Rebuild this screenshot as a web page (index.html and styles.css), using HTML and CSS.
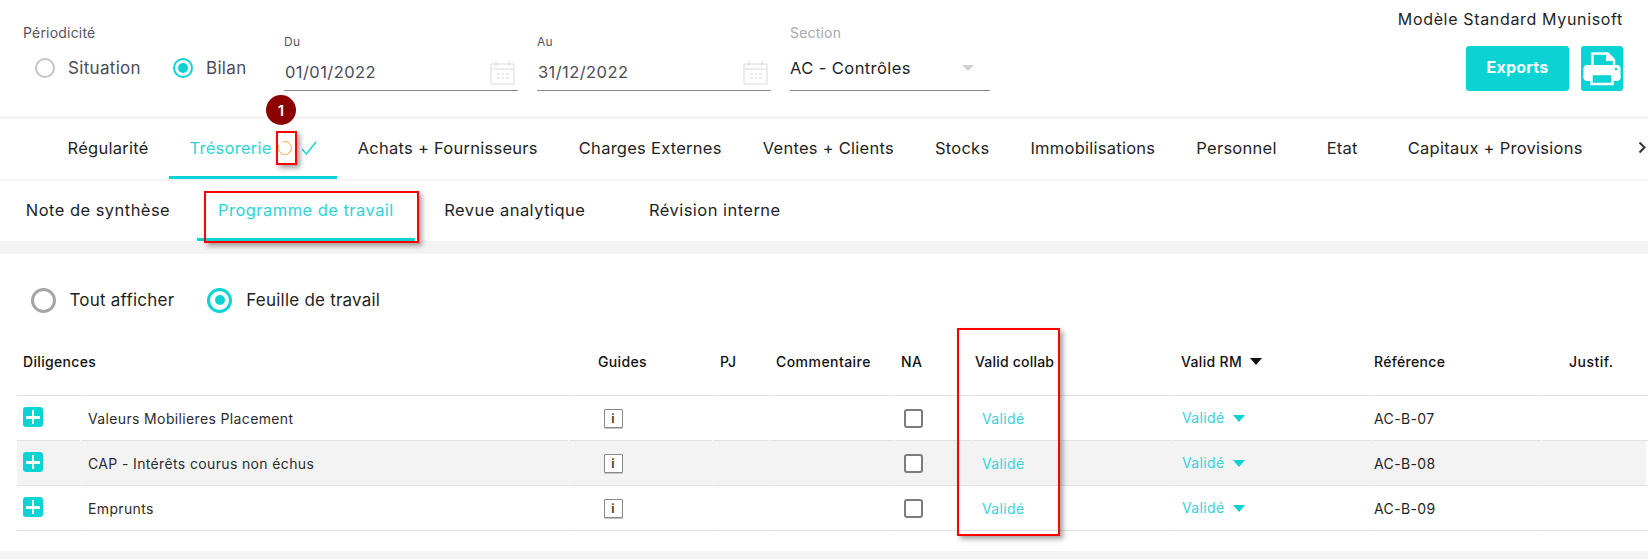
FILE: index.html
```html
<!DOCTYPE html>
<html lang="fr">
<head>
<meta charset="utf-8">
<title>Programme de travail</title>
<link rel="stylesheet" href="styles.css">
</head>
<body>
<div class="page">
  <header class="top">
    <div class="period">
      <div class="label period-label">Périodicité</div>
      <div class="radios">
        <label class="radio"><span class="dot"></span>Situation</label>
        <label class="radio on"><span class="dot"></span>Bilan</label>
      </div>
    </div>
    <div class="field date">
      <div class="mini">Du</div>
      <div class="value"><span>01/01/2022</span>
        <svg class="cal" viewBox="0 0 25 25" width="25" height="25"><path d="M1 4h23v20H1zM1 9h23M6 1v5M19 1v5" fill="none" stroke="#ddd6e0"/><path d="M7 14h3M12 14h2M16 14h3M7 18h3M12 18h2M16 18h3" stroke="#d5d5d5"/></svg>
      </div>
    </div>
    <div class="field date">
      <div class="mini">Au</div>
      <div class="value"><span>31/12/2022</span>
        <svg class="cal" viewBox="0 0 25 25" width="25" height="25"><path d="M1 4h23v20H1zM1 9h23M6 1v5M19 1v5" fill="none" stroke="#ddd6e0"/><path d="M7 14h3M12 14h2M16 14h3M7 18h3M12 18h2M16 18h3" stroke="#d5d5d5"/></svg>
      </div>
    </div>
    <div class="field section">
      <div class="label section-label">Section</div>
      <div class="value select"><span>AC - Contrôles</span><i class="caret grey"></i></div>
    </div>
    <div class="right">
      <div class="model">Modèle Standard Myunisoft</div>
      <div class="actions">
        <button class="export">Exports</button>
        <button class="print" aria-label="Imprimer">
          <svg viewBox="0 0 42 45" width="42" height="45"><path d="M11.500 20V7.500H26L33 14.500V20" fill="none" stroke="#fff" stroke-width="2.500"/><path d="M25 6h2l7 7v2h-9z" fill="#fff"/><rect x="2.500" y="19" width="37" height="15" rx="3.500" fill="#fff"/><rect x="10.500" y="28" width="21" height="10" fill="#0bd3d3" stroke="#fff" stroke-width="2.500"/><path d="M2.500 30v1a4 4 0 0 0 4 4h4v-5zM39.500 30v1a4 4 0 0 1-4 4h-4v-5z" fill="#fff"/><circle cx="35" cy="23" r="1.300" fill="#0bd3d3"/></svg>
        </button>
      </div>
    </div>
  </header>
  <div class="strip s3"></div>
  <nav class="tabs">
    <a class="tab">Régularité</a>
    <a class="tab active">Trésorerie
      <svg class="spin" viewBox="0 0 16 16" width="16" height="16"><path d="M5.500 2A6.500 6.500 0 1 1 2.200 5" fill="none" stroke="#f4c27c" stroke-width="1.300"/></svg>
      <svg class="check" viewBox="0 0 16 14" width="16" height="14"><path d="M1 8l4.500 5L15 1" fill="none" stroke="#0bd3d3" stroke-width="1.300"/></svg>
    </a>
    <a class="tab">Achats + Fournisseurs</a>
    <a class="tab">Charges Externes</a>
    <a class="tab">Ventes + Clients</a>
    <a class="tab">Stocks</a>
    <a class="tab">Immobilisations</a>
    <a class="tab">Personnel</a>
    <a class="tab">Etat</a>
    <a class="tab">Capitaux + Provisions</a>
    <svg class="more" viewBox="0 0 8 13" width="8" height="13"><path d="M1.500 1.500L6.500 6.500L1.500 11.500" fill="none" stroke="#333" stroke-width="2"/></svg>
  </nav>
  <nav class="subtabs">
    <a class="sub first">Note de synthèse</a>
    <a class="sub active">Programme de travail</a>
    <a class="sub">Revue analytique</a>
    <a class="sub">Révision interne</a>
  </nav>
  <div class="strip s13"></div>
  <main class="content">
    <div class="filters">
      <label class="radio big"><span class="dot"></span>Tout afficher</label>
      <label class="radio big on"><span class="dot"></span>Feuille de travail</label>
    </div>
    <div class="table">
      <div class="row head">
        <div class="cell"></div>
        <div class="cell c-name-h"><span class="shift-left">Diligences</span></div>
        <div class="cell c-guides-h">Guides</div>
        <div class="cell c-pj-h">PJ</div>
        <div class="cell c-com-h">Commentaire</div>
        <div class="cell c-na-h">NA</div>
        <div class="cell c-col-h">Valid collab</div>
        <div class="cell c-rm-h">Valid RM<i class="caret black"></i></div>
        <div class="cell c-ref">Référence</div>
        <div class="cell c-jus-h">Justif.</div>
      </div>
      <div class="row">
        <div class="cell c-plus"><span class="plus"></span></div>
        <div class="cell c-name">Valeurs Mobilieres Placement</div>
        <div class="cell c-guides"><span class="info">i</span></div>
        <div class="cell"></div>
        <div class="cell"></div>
        <div class="cell c-na"><span class="box"></span></div>
        <div class="cell c-col teal">Validé</div>
        <div class="cell c-rm teal">Validé<i class="caret cyan"></i></div>
        <div class="cell c-ref">AC-B-07</div>
        <div class="cell"></div>
      </div>
      <div class="row alt">
        <div class="cell c-plus"><span class="plus"></span></div>
        <div class="cell c-name">CAP - Intérêts courus non échus</div>
        <div class="cell c-guides"><span class="info">i</span></div>
        <div class="cell"></div>
        <div class="cell"></div>
        <div class="cell c-na"><span class="box"></span></div>
        <div class="cell c-col teal">Validé</div>
        <div class="cell c-rm teal">Validé<i class="caret cyan"></i></div>
        <div class="cell c-ref">AC-B-08</div>
        <div class="cell"></div>
      </div>
      <div class="row">
        <div class="cell c-plus"><span class="plus"></span></div>
        <div class="cell c-name">Emprunts</div>
        <div class="cell c-guides"><span class="info">i</span></div>
        <div class="cell"></div>
        <div class="cell"></div>
        <div class="cell c-na"><span class="box"></span></div>
        <div class="cell c-col teal">Validé</div>
        <div class="cell c-rm teal">Validé<i class="caret cyan"></i></div>
        <div class="cell c-ref">AC-B-09</div>
        <div class="cell"></div>
      </div>
    </div>
  </main>
  <div class="strip s8"></div>
  <div class="mark mark-spin"></div>
  <div class="mark mark-prog"></div>
  <div class="mark mark-col"></div>
  <div class="badge">1</div>
</div>
</body>
</html>
```
FILE: styles.css
```css
* { box-sizing: border-box; }
html, body { margin: 0; padding: 0; background: #fff; }
body { font-family: Inter, "Liberation Sans", sans-serif; color: #1f1f24; font-size: 16px; }
.page { position: relative; width: 1648px; height: 559px; overflow: hidden; }

.strip { background: #f4f4f4; }
.s3 { height: 3px; }
.s13 { height: 13px; }
.s8 { height: 8px; }

.top { display: flex; height: 116px; padding: 0 25px 0 23px; }
.label { font-size: 14px; line-height: 18px; letter-spacing: .2px; }
.period { width: 261px; padding-top: 24px; }
.period-label { color: #55555d; }
.radios { display: flex; gap: 32px; margin-top: 16px; padding-left: 12px; }
.radio { display: flex; align-items: center; gap: 13px; font-size: 17px; line-height: 20px; color: #4c4c54; letter-spacing: .32px; height: 20px; }
.dot { width: 20px; height: 20px; border-radius: 50%; border: 2px solid #c4c4c4; display: block; position: relative; flex: none; }
.on .dot { border-color: #0bd3d3; }
.on .dot::after { content: ""; position: absolute; left: 3px; top: 3px; width: 10px; height: 10px; border-radius: 50%; background: #0bd3d3; }

.field { display: flex; flex-direction: column; height: 91px; border-bottom: 1.500px solid #8b8b8b; }
.date { width: 234px; margin-right: 19px; padding-top: 34px; }
.mini { font-size: 12px; line-height: 16px; color: #55555d; letter-spacing: .3px; }
.value { display: flex; align-items: center; justify-content: space-between; padding: 0 3px 0 1px; font-size: 16.500px; letter-spacing: .42px; color: #4c4c54; height: 24px; margin-top: 10px; }
.cal { flex: none; }
.section { width: 200px; padding-top: 24px; }
.section-label { color: #a9a9ae; }
.select { padding: 0 16px 0 0; color: #1f1f24; margin-top: 14px; letter-spacing: .42px; }
.right { margin-left: auto; display: flex; flex-direction: column; align-items: flex-end; padding-top: 10px; }
.model { font-size: 16px; line-height: 18px; letter-spacing: .66px; color: #1f1f24; }
.actions { display: flex; gap: 12px; margin-top: 18px; }
.export { width: 103px; height: 45px; border: 0; border-radius: 3px; background: #0bd3d3; color: #fff; font: 700 16px Inter, sans-serif; letter-spacing: .2px; padding: 0 0 3px; }
.print { width: 42px; height: 45px; border: 0; border-radius: 3px; background: #0bd3d3; padding: 0; display: block; }
.print svg { display: block; }

.caret { display: block; width: 0; height: 0; border-style: solid; border-color: transparent; border-width: 7px 6.500px 0; }
.grey { border-top-color: #d2d2d2; border-width: 6px 6px 0; }
.black { border-top-color: #111; margin-left: 8px; margin-bottom: 5px; }
.cyan { border-top-color: #0bd3d3; margin: 3px 0 0 8px; }

.tabs { display: flex; align-items: stretch; height: 62px; padding-left: 47px; border-bottom: 2px solid #f4f4f4; position: relative; }
.tab { min-width: 90px; padding: 0 20.500px 2px; height: 60px; display: flex; align-items: center; justify-content: center; font-size: 16.500px; letter-spacing: .26px; white-space: nowrap; color: #1f1f24; }
.tab.active { color: #2fd3d6; border-bottom: 3px solid #0bd3d3; padding-bottom: 0; padding-top: 1px; }
.spin { margin-left: 5px; }
.check { margin-left: 8px; }
.more { position: absolute; right: 2px; top: 22px; }

.subtabs { display: flex; height: 60px; }
.sub { min-width: 200px; padding: 0 21px 3px; display: flex; align-items: center; justify-content: center; font-size: 16.500px; letter-spacing: .46px; white-space: nowrap; color: #1f1f24; }
.sub.first { min-width: 196px; padding: 0 0 3px; margin-right: 1px; }
.sub.active { color: #2fd3d6; border-bottom: 3px solid #0bd3d3; padding-bottom: 0; }

.content { height: 297px; padding: 34px 2px 0 17px; }
.filters { display: flex; gap: 33px; padding-left: 13.500px; height: 24px; }
.radio.big { gap: 14px; color: #1f1f24; height: 24px; letter-spacing: .22px; }
.big .dot { width: 25px; height: 25px; border: 3px solid #a5a5a5; }
.big.on .dot { border-color: #0bd3d3; }
.big.on .dot::after { left: 4.500px; top: 4.500px; width: 10px; height: 10px; }

.table { margin-top: 24px; }
.row { display: grid; grid-template-columns: 63px 487px 143px 56px 124px 76px 200px 198px 169px 109px; column-gap: 1px; height: 45px; }
.row.head { height: 60px; }
.row.alt { background: #f3f3f3; }
.cell { display: flex; align-items: center; border-bottom: 1.500px solid #e2e2e2; font-size: 14px; letter-spacing: .36px; white-space: nowrap; min-width: 0; }
.row.head .cell { align-items: flex-end; font-size: 14px; font-weight: 500; letter-spacing: .33px; line-height: 17px; padding-bottom: 25px; color: #111; }
.shift-left { margin-left: -58px; }
.c-plus { padding: 0 0 2px 6px; }
.plus { display: block; width: 20px; height: 20px; border-radius: 3px; background: #0bd3d3; position: relative; }
.plus::before { content: ""; position: absolute; left: 3px; right: 3px; top: 9px; height: 2.500px; background: #fff; }
.plus::after { content: ""; position: absolute; top: 3px; bottom: 3px; left: 8.750px; width: 2.500px; background: #fff; }
.c-name { padding-left: 7px; color: #2c2c30; }
.row.head .c-guides-h { padding-left: 29px; }
.row.head .c-pj-h { padding-left: 7px; }
.row.head .c-com-h { padding-left: 6px; letter-spacing: .45px; }
.row.head .c-na-h { padding-left: 6px; }
.row.head .c-col-h { padding-left: 3px; letter-spacing: .2px; }
.row.head .c-rm-h { padding-left: 8px; }
.row.head .c-jus-h { padding-left: 27px; letter-spacing: .5px; }
.c-guides { padding-left: 34.500px; }
.c-na { padding-left: 9px; }
.c-col { padding-left: 10px; }
.c-rm { padding-left: 9px; padding-bottom: 2px; }
.c-ref { padding-left: 2px; }
.teal { color: #36d3d8; }
.info { width: 19px; height: 19px; border: 1px solid #888; border-radius: 1px; display: flex; align-items: center; justify-content: center; font-size: 12.500px; font-weight: 600; color: #3a3328; background: #fff; box-shadow: 0 1px 0 #c4c4c4; }
.box { display: block; width: 19px; height: 19px; border: 2px solid #7c7c7c; border-radius: 3px; background: #fff; }

.mark { position: absolute; border: 2px solid #f00; box-shadow: 3px 3px 5px rgba(70, 70, 70, .5); }
.mark-spin { left: 276px; top: 131px; width: 21px; height: 34px; }
.mark-prog { left: 204px; top: 191px; width: 215px; height: 52px; }
.mark-col { left: 957px; top: 328px; width: 103px; height: 208px; }
.badge { position: absolute; left: 266px; top: 95px; width: 30px; height: 30px; border-radius: 50%; background: #8c0000; color: #fff; font-size: 15px; font-weight: 600; display: flex; align-items: center; justify-content: center; }
```
